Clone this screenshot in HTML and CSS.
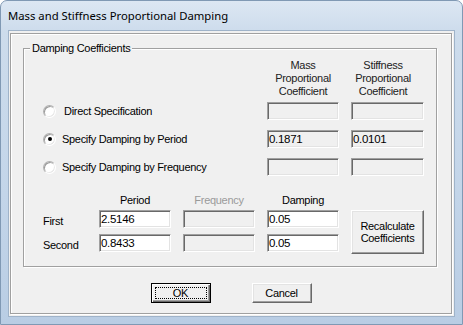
FILE: index.html
```html
<!DOCTYPE html>
<html lang="en">
<head>
    <meta charset="UTF-8">
    <title>Mass and Stiffness Proportional Damping</title>
    <link rel="stylesheet" href="styles.css">
</head>
<body>
    <div class="window">
        <div class="titlebar">Mass and Stiffness Proportional Damping</div>
        <div class="client">
            <div class="panel">
                <fieldset class="group">
                    <legend>Damping Coefficients</legend>
                    <div class="group-body">
                        <div class="coef">
                            <div class="head mass-head">Mass<br>Proportional<br>Coefficient</div>
                            <div class="head stiff-head">Stiffness<br>Proportional<br>Coefficient</div>

                            <div class="choice"><span class="radio"></span><span class="pad">Direct Specification</span></div>
                            <div class="field c4"></div>
                            <div class="field c5"></div>

                            <div class="choice"><span class="radio checked"></span><span>Specify Damping by Period</span></div>
                            <div class="field c4">0.1871</div>
                            <div class="field c5">0.0101</div>

                            <div class="choice"><span class="radio"></span><span>Specify Damping by Frequency</span></div>
                            <div class="field c4"></div>
                            <div class="field c5"></div>
                        </div>

                        <div class="period">
                            <div class="col-title c2">Period</div>
                            <div class="col-title c3 disabled">Frequency</div>
                            <div class="col-title c4">Damping</div>

                            <div class="row-label">First</div>
                            <div class="field edit">2.5146</div>
                            <div class="field"></div>
                            <div class="field edit">0.05</div>
                            <button class="btn recalc">Recalculate<br>Coefficients</button>

                            <div class="row-label">Second</div>
                            <div class="field edit">0.8433</div>
                            <div class="field"></div>
                            <div class="field edit">0.05</div>
                        </div>
                    </div>
                </fieldset>
                <div class="buttons">
                    <button class="btn default"><span class="focus">OK</span></button>
                    <button class="btn">Cancel</button>
                </div>
            </div>
        </div>
    </div>
</body>
</html>
```

FILE: styles.css
```css
* {
    box-sizing: border-box;
}
body {
    margin: 0;
    font-family: "Liberation Sans", Arial, sans-serif;
    font-size: 11px;
    letter-spacing: -0.3px;
    color: #000;
}
.window {
    width: 463px;
    height: 325px;
    padding: 0 7px 7px;
    display: flex;
    flex-direction: column;
    border: 1px solid #8099b4;
    border-radius: 7px 7px 0 0;
    background: linear-gradient(180deg, #dce7f3 0, #cddcec 30px, #c3d5e9 60%, #b9cde4 100%);
}
.titlebar {
    height: 29px;
    display: flex;
    align-items: center;
    font-family: "Noto Sans", "Open Sans", sans-serif;
    font-size: 11.3px;
    letter-spacing: 0;
    color: #000;
}
.client {
    flex: 1;
    display: flex;
    padding: 2px 2px 2px 1px;
    background: #f0f0f0;
    border: 1px solid #9fb3c9;
}
.panel {
    flex: 1;
    padding: 8px 0 0 12px;
    border: 1px solid #a0a0a0;
    box-shadow: inset 1px 1px #fff, 1px 1px #fff;
}
.group {
    width: 414px;
    margin: 0;
    padding: 0;
    border: 1px solid #a0a0a0;
    box-shadow: inset 1px 1px #fff, 1px 1px #fff;
}
.group legend {
    margin-left: 6px;
    padding: 0 2px;
    line-height: 13px;
    background: #f0f0f0;
}
.group-body {
    padding: 4px 12px 12px 19px;
}
.coef,
.period {
    display: grid;
    grid-template-columns: 44px 72px 72px 72px 73px;
    column-gap: 12px;
    align-items: start;
}
.coef {
    grid-template-rows: 43px 28px 28px 18px;
}
.period {
    margin-top: 18px;
    grid-template-rows: 16px 24px 20px;
}
.head {
    line-height: 13px;
    text-align: center;
    color: #222;
}
.mass-head {
    grid-column: 4;
}
.stiff-head {
    grid-column: 5;
    padding-right: 9px;
}
.choice {
    grid-column: 1 / 4;
    height: 18px;
    display: flex;
    align-items: center;
    gap: 6px;
}
.choice .pad {
    margin-left: 2px;
}
.radio {
    width: 13px;
    height: 13px;
    border-radius: 50%;
    border: 1px solid;
    border-color: #b0b0b0 #fff #fff #b0b0b0;
    box-shadow: inset 1px 1px #9a9a9a, inset -1px -1px #e8e8e8;
    background: #fff;
    display: flex;
    align-items: center;
    justify-content: center;
}
.radio.checked::after {
    content: "";
    width: 4px;
    height: 4px;
    border-radius: 50%;
    background: #000;
}
.c4 {
    grid-column: 4;
}
.c5 {
    grid-column: 5;
}
.c2 {
    grid-column: 2;
}
.c3 {
    grid-column: 3;
}
.field {
    height: 18px;
    padding: 0 0 0 1px;
    line-height: 16px;
    border: 1px solid;
    border-color: #a0a0a0 #fff #fff #a0a0a0;
    box-shadow: inset 1px 1px #696969, inset -1px -1px #e3e3e3;
    background: #f0f0f0;
    white-space: nowrap;
    font-size: 11.5px;
}
.field.edit {
    background: #fff;
}
.col-title {
    line-height: 13px;
    text-align: center;
}
.disabled {
    color: #9a9a9a;
}
.row-label {
    grid-column: 1;
    padding-top: 4px;
    line-height: 14px;
}
.btn {
    width: 60px;
    height: 20px;
    padding: 0;
    font-family: "Liberation Sans", Arial, sans-serif;
    font-size: 11px;
    letter-spacing: -0.3px;
    color: #000;
    background: #f0f0f0;
    border: 1px solid;
    border-color: #fff #696969 #696969 #fff;
    box-shadow: inset -1px -1px #a0a0a0, inset 1px 1px #e3e3e3;
}
.btn.recalc {
    grid-column: 5;
    grid-row: 2 / 4;
    width: 73px;
    height: 44px;
    line-height: 12px;
}
.btn.default {
    border: 1px solid #000;
    box-shadow: inset 1px 1px #fff, inset -1px -1px #696969, inset -2px -2px #a0a0a0;
    padding: 3px;
}
.focus {
    display: block;
    height: 100%;
    line-height: 10px;
    border: 1px dotted #000;
}
.buttons {
    margin: 16px 0 0 -12px;
    display: flex;
    justify-content: center;
    gap: 41px;
}
```
